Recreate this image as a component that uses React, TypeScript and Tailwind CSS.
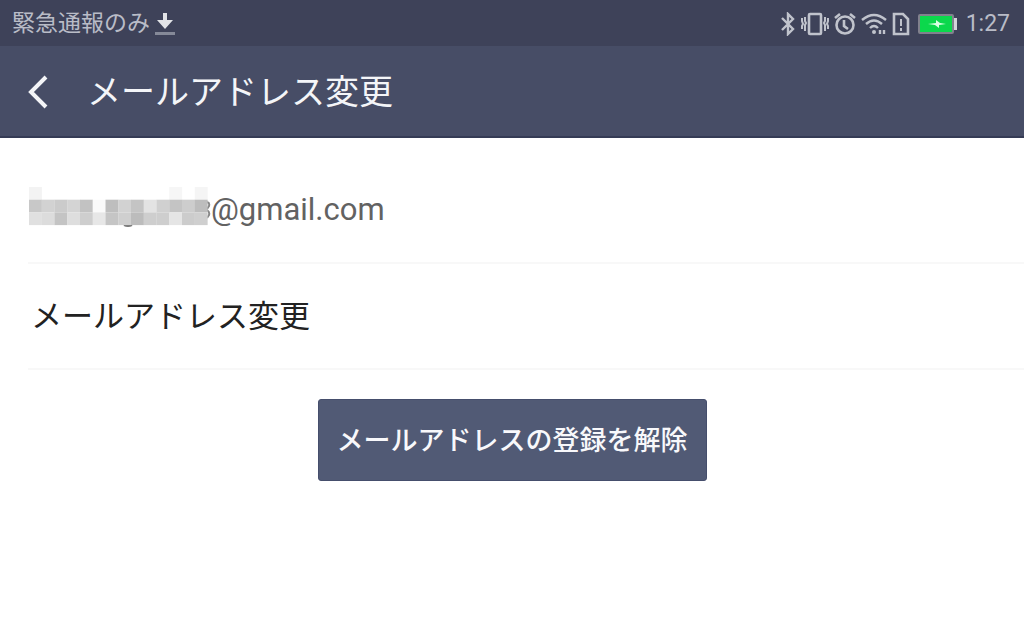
const mosaicRows = [
  ["#f3f3f3", "", "", "", "", "", "", "", "", "", "", "#f6f6f6", "", "#f5f5f5"],
  ["#c8c8c8", "#d2d2d2", "#cbcbcb", "#d4d4d4", "#c2c2c2", "#fafafa", "#bebebe", "#d2d2d2", "#c4c4c4", "#e3e3e3", "#d0d0d0", "#c4c4c4", "#cdcdcd", "#bdbdbd"],
  ["#e0e0e0", "#dcdcdc", "#c4c4c4", "#dedede", "#cecece", "#e7e7e7", "#c5c5c5", "#cfcfcf", "#bcbcbc", "#cecece", "#cecece", "#e5e5e5", "#cccccc", "#cfcfcf"],
]

const MaskedName = () => (
  <svg className="h-[42px] w-[183px] shrink-0" viewBox="0 0 183 42" role="img" aria-label="hidden">
    <path d="M96 38q4 2 8 0" fill="none" stroke="#777" strokeWidth="2" />
    <path d="M179 15q3 1 2 4l-2 3M179 23q3 2 2 5l-2 3" fill="none" stroke="#888" strokeWidth="2" />
    {mosaicRows.map((row, y) =>
      row.map((color, x) =>
        color ? (
          <rect key={`${x}-${y}`} x={1 + x * 12.75} y={y * 12.7} width="12.9" height="12.7" fill={color} />
        ) : null
      )
    )}
  </svg>
)

const DownloadIcon = () => (
  <svg className="h-6 w-[22px]" viewBox="0 0 22 24" aria-hidden="true">
    <path d="M9 1h4v7h6l-8 9-8-9h6z" fill="#e2e3e7" />
    <path d="M1 20h20v3H1z" fill="#858998" />
  </svg>
)

const BluetoothIcon = () => (
  <svg className="h-6 w-4" viewBox="0 0 16 24" fill="none" stroke="#c0c3cc" strokeWidth="2.4" aria-hidden="true">
    <path d="M2 6l11 11-5 5V2l5 5L2 18" />
  </svg>
)

const VibrateIcon = () => (
  <svg className="h-6 w-7" viewBox="0 0 28 24" fill="none" stroke="#c0c3cc" strokeWidth="2" aria-hidden="true">
    <rect x="8" y="2" width="12" height="20" rx="1" strokeWidth="2.6" />
    <path d="M4 5v4l1 2-1 2v6M1 6v3l1 3-1 2v3M24 5v4l-1 2 1 2v6M27 6v3l-1 3 1 2v3" />
  </svg>
)

const AlarmIcon = () => (
  <svg className="h-6 w-[22px]" viewBox="0 0 22 24" fill="none" stroke="#c0c3cc" strokeWidth="2.6" aria-hidden="true">
    <circle cx="11" cy="13" r="8.5" />
    <path d="M1 6l5-4M21 6l-5-4M10 8v6l4 3" />
  </svg>
)

const WifiIcon = () => (
  <svg className="h-6 w-[26px]" viewBox="0 0 26 24" fill="none" stroke="#c0c3cc" strokeWidth="2.4" aria-hidden="true">
    <path d="M1 8q12-10 24 0M5 12q8-7 16 0M9 16q4-4 8 0" />
    <circle cx="13" cy="20" r="2" fill="#c0c3cc" stroke="none" />
    <path d="M19 22v-4M23 22v-4" />
  </svg>
)

const SimIcon = () => (
  <svg className="h-6 w-[18px]" viewBox="0 0 18 24" fill="none" stroke="#c0c3cc" strokeWidth="2.6" aria-hidden="true">
    <path d="M2 2h9l5 5v15H2z" />
    <path d="M9 7v7M9 16v3" strokeWidth="2" />
  </svg>
)

const BatteryIcon = () => (
  <svg className="h-6 w-10" viewBox="0 0 40 24" aria-hidden="true">
    <rect x="1" y="3" width="34" height="18" rx="1" fill="#0bd84c" stroke="#81818d" strokeWidth="2" />
    <path d="M36 6h3v12h-3z" fill="#d5d3da" />
    <path d="M10 12l8-1V8l4 3 6 1-7 1v3l-4-3z" fill="#d9ffe3" />
  </svg>
)

const StatusBar = () => (
  <div className="flex h-[46px] items-center justify-between bg-[#3e4259] pt-[2px] pr-[14px] pl-3 text-[#b9bcc7]">
    <div className="flex items-center gap-1">
      <span className="text-[23px] leading-8">緊急通報のみ</span>
      <DownloadIcon />
    </div>
    <div className="flex items-center gap-2">
      <div className="flex items-center gap-[5px]">
        <BluetoothIcon />
        <VibrateIcon />
        <AlarmIcon />
        <WifiIcon />
        <SimIcon />
      </div>
      <BatteryIcon />
      <span className="text-[23px] leading-8">1:27</span>
    </div>
  </div>
)

const App = () => {
  return (
    <div className="min-h-screen bg-white font-['Roboto','Noto_Sans_CJK_JP',sans-serif]">
      <StatusBar />
      <header className="flex h-[92px] items-center border-b-2 border-[#353b55] bg-[#474d66] pt-[2px] pl-[27px] text-[#f4f5f8]">
        <button type="button" aria-label="戻る" className="w-[60px]">
          <svg className="h-9 w-[22px]" viewBox="0 0 22 36" fill="none" stroke="currentColor" strokeWidth="4" aria-hidden="true">
            <path d="M19 3L4 18l15 15" />
          </svg>
        </button>
        <h1 className="text-[34px] leading-[46px]">メールアドレス変更</h1>
      </header>
      <main>
        <div className="ml-7 flex h-[126px] items-center border-b-2 border-[#f8f8f8] pt-4 text-[31px] text-[#626262]">
          <MaskedName />
          <span className="pt-1">@gmail.com</span>
        </div>
        <button type="button" className="ml-7 flex h-[106px] w-[calc(100%-28px)] items-center border-b-2 border-[#f8f8f8] pt-[2px] pl-[3px] text-left text-[31px] text-[#222]">
          メールアドレス変更
        </button>
        <div className="flex justify-center pt-[29px]">
          <button type="button" className="rounded-[3px] border border-[#454e6c] bg-[#515a75] px-[18px] pt-[21px] pb-[19px] text-[27px] leading-10 font-medium text-[#f8f8fb]">
            メールアドレスの登録を解除
          </button>
        </div>
      </main>
    </div>
  )
}

export default App
